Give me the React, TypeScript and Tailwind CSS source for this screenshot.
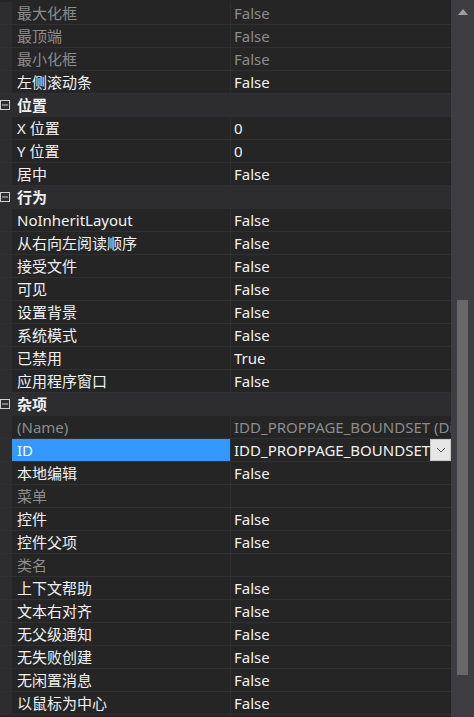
type Row =
  | { kind: "section"; label: string }
  | { kind: "prop"; name: string; value?: string; dim?: boolean; selected?: boolean; combo?: boolean };

const rows: Row[] = [
  { kind: "prop", name: "最大化框", value: "False", dim: true },
  { kind: "prop", name: "最顶端", value: "False", dim: true },
  { kind: "prop", name: "最小化框", value: "False", dim: true },
  { kind: "prop", name: "左侧滚动条", value: "False" },
  { kind: "section", label: "位置" },
  { kind: "prop", name: "X 位置", value: "0" },
  { kind: "prop", name: "Y 位置", value: "0" },
  { kind: "prop", name: "居中", value: "False" },
  { kind: "section", label: "行为" },
  { kind: "prop", name: "NoInheritLayout", value: "False" },
  { kind: "prop", name: "从右向左阅读顺序", value: "False" },
  { kind: "prop", name: "接受文件", value: "False" },
  { kind: "prop", name: "可见", value: "False" },
  { kind: "prop", name: "设置背景", value: "False" },
  { kind: "prop", name: "系统模式", value: "False" },
  { kind: "prop", name: "已禁用", value: "True" },
  { kind: "prop", name: "应用程序窗口", value: "False" },
  { kind: "section", label: "杂项" },
  { kind: "prop", name: "(Name)", value: "IDD_PROPPAGE_BOUNDSET (Dialog)", dim: true },
  { kind: "prop", name: "ID", value: "IDD_PROPPAGE_BOUNDSET", selected: true, combo: true },
  { kind: "prop", name: "本地编辑", value: "False" },
  { kind: "prop", name: "菜单", dim: true },
  { kind: "prop", name: "控件", value: "False" },
  { kind: "prop", name: "控件父项", value: "False" },
  { kind: "prop", name: "类名", dim: true },
  { kind: "prop", name: "上下文帮助", value: "False" },
  { kind: "prop", name: "文本右对齐", value: "False" },
  { kind: "prop", name: "无父级通知", value: "False" },
  { kind: "prop", name: "无失败创建", value: "False" },
  { kind: "prop", name: "无闲置消息", value: "False" },
  { kind: "prop", name: "以鼠标为中心", value: "False" },
];

function CollapseBox() {
  return (
    <svg width="10" height="10" viewBox="0 0 10 10" className="block">
      <rect x="0.5" y="0.5" width="9" height="9" fill="none" stroke="#d0d0d0" strokeWidth="1" />
      <line x1="2" y1="5" x2="8" y2="5" stroke="#d0d0d0" strokeWidth="1" />
    </svg>
  );
}

function SectionRow({ label }: { label: string }) {
  return (
    <div className="flex h-[23px] items-center bg-[#2d2d30] border-b border-[#2d2d30]">
      <div className="w-[12px] flex justify-start">
        <CollapseBox />
      </div>
      <span className="pl-[5px] font-bold text-[#f1f1f1]">{label}</span>
    </div>
  );
}

function PropRow({ row }: { row: Extract<Row, { kind: "prop" }> }) {
  const color = row.dim ? "text-[#8c8c8c]" : "text-[#f1f1f1]";
  return (
    <div className="flex h-[23px] border-b border-[#303034]">
      <div className="w-[12px] shrink-0 bg-[#2d2d30]" />
      <div
        className={
          row.selected
            ? "w-[219px] shrink-0 flex items-center pl-[5px] bg-[#3399ff] text-white border-r border-[#2d2d30]"
            : `w-[219px] shrink-0 flex items-center pl-[5px] ${color} border-r border-[#2d2d30]`
        }
      >
        <span className="whitespace-nowrap">{row.name}</span>
      </div>
      <div className={`flex-1 min-w-0 flex items-center pl-[3px] ${color}`}>
        <span className="flex-1 min-w-0 whitespace-nowrap overflow-hidden leading-[20px]">{row.value}</span>
        {row.combo && (
          <div className="w-[21px] h-full shrink-0 bg-[#e6e6e6] border border-[#c8c8c8] flex items-center justify-center">
            <svg width="10" height="6" viewBox="0 0 10 6">
              <polyline points="1,1 5,5 9,1" fill="none" stroke="#555555" strokeWidth="1" />
            </svg>
          </div>
        )}
      </div>
    </div>
  );
}

export default function App() {
  return (
    <div
      className="w-[474px] h-[717px] flex bg-[#252526] overflow-hidden text-[15px] leading-none"
      style={{ fontFamily: '"Noto Sans", "Noto Sans CJK SC", sans-serif' }}
    >
      <div className="w-[451px] shrink-0 flex flex-col pt-[2px]">
        {rows.map((row, i) =>
          row.kind === "section" ? (
            <SectionRow key={i} label={row.label} />
          ) : (
            <PropRow key={i} row={row} />
          )
        )}
      </div>

      {/* Scrollbar */}
      <div className="w-[23px] shrink-0 bg-[#3e3e42] flex flex-col items-center">
        <div className="h-[24px] flex items-center justify-center">
          <svg width="10" height="6" viewBox="0 0 10 6">
            <polygon points="0,6 5,0 10,6" fill="#9e9e9e" />
          </svg>
        </div>
        <div className="mt-[276px] w-[11px] h-[375px] bg-[#686868] -ml-[1px]" />
      </div>
    </div>
  );
}
